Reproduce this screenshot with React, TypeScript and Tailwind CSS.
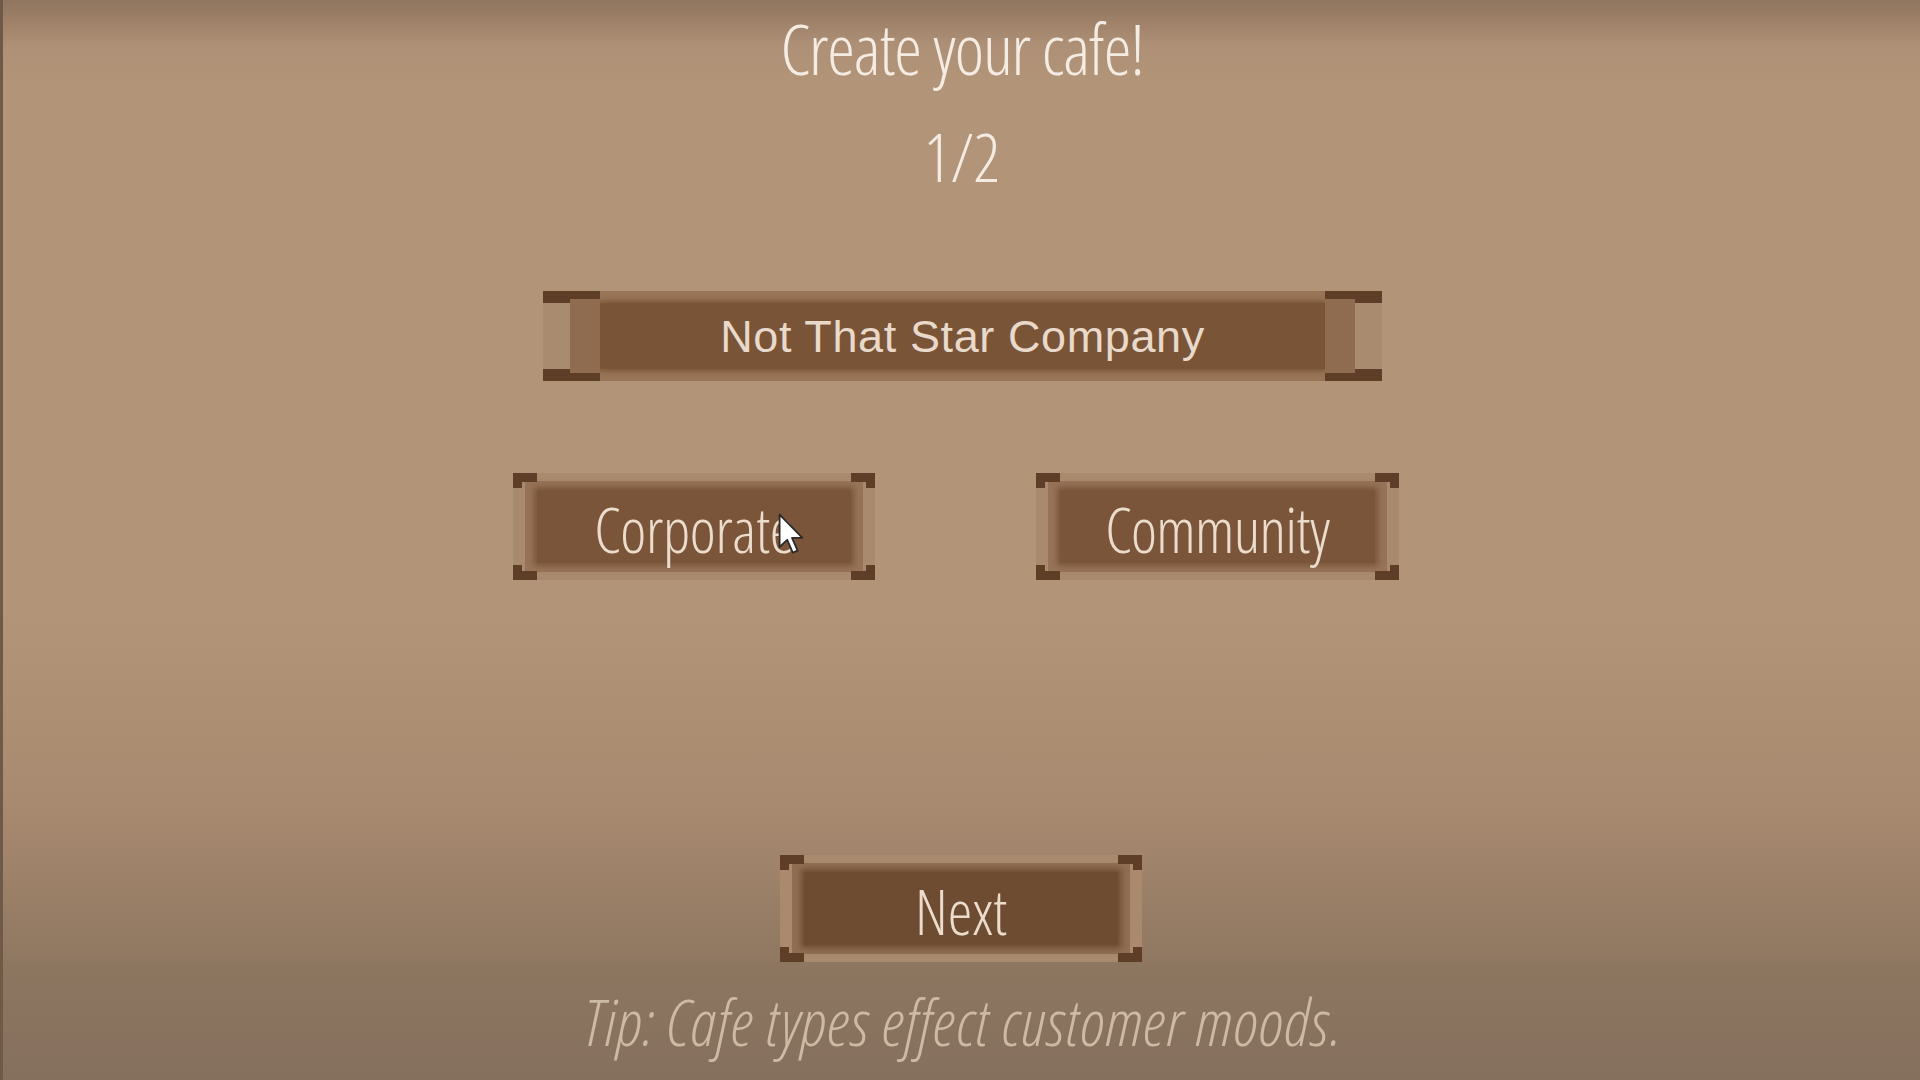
import React from "react";

const cond = "font-['Open_Sans',sans-serif] font-light [font-stretch:75%]";

function Corners({ color }: { color: string }) {
  return (
    <>
      <div className="absolute left-0 top-0 w-[24px] h-[15px]">
        <div className={`absolute left-0 top-0 w-[24px] h-[9px] ${color}`} />
        <div className={`absolute left-0 top-0 w-[9px] h-[15px] ${color}`} />
      </div>
      <div className="absolute right-0 top-0 w-[24px] h-[15px]">
        <div className={`absolute right-0 top-0 w-[24px] h-[9px] ${color}`} />
        <div className={`absolute right-0 top-0 w-[9px] h-[15px] ${color}`} />
      </div>
      <div className="absolute left-0 bottom-0 w-[24px] h-[15px]">
        <div className={`absolute left-0 bottom-0 w-[24px] h-[9px] ${color}`} />
        <div className={`absolute left-0 bottom-0 w-[9px] h-[15px] ${color}`} />
      </div>
      <div className="absolute right-0 bottom-0 w-[24px] h-[15px]">
        <div className={`absolute right-0 bottom-0 w-[24px] h-[9px] ${color}`} />
        <div className={`absolute right-0 bottom-0 w-[9px] h-[15px] ${color}`} />
      </div>
    </>
  );
}

function WoodButton({
  label,
  dark = false,
  className = "",
  textClass = "",
  children,
}: {
  label: string;
  dark?: boolean;
  className?: string;
  textClass?: string;
  children?: React.ReactNode;
}) {
  return (
    <div className={`relative w-[362px] h-[107px] bg-[#a98a6e] px-[12px] py-[8px] ${className}`}>
      <div className={`h-full w-full px-[12px] py-[9px] ${dark ? "bg-[#8f6e53]" : "bg-[#977459]"}`}>
        <div
          className={`h-full w-full flex items-center justify-center ${
            dark ? "bg-[#6e4c32] shadow-[0_0_6px_3px_#6e4c32]" : "bg-[#7a5539] shadow-[0_0_6px_3px_#7a5539]"
          }`}
        >
          <span className={`${cond} text-[62px] leading-none text-[#ecdccb] pt-[4px] ${textClass}`}>{label}</span>
        </div>
      </div>
      <Corners color="bg-[#5f3e28]" />
      {children}
    </div>
  );
}

function NameCap({ side }: { side: "left" | "right" }) {
  const left = side === "left";
  return (
    <div className={`relative w-[57px] h-full flex ${left ? "flex-row" : "flex-row-reverse"}`}>
      <div className="w-[27px] h-full bg-[#a98b6f]" />
      <div className="w-[30px] h-full bg-[#8f6c4f]" />
      <div className={`absolute top-0 ${left ? "left-0" : "right-0"} w-[57px] h-[8px] bg-[#5f3e28]`} />
      <div className={`absolute top-0 ${left ? "left-0" : "right-0"} w-[27px] h-[12px] bg-[#5f3e28]`} />
      <div className={`absolute bottom-0 ${left ? "left-0" : "right-0"} w-[57px] h-[8px] bg-[#5f3e28]`} />
      <div className={`absolute bottom-0 ${left ? "left-0" : "right-0"} w-[27px] h-[12px] bg-[#5f3e28]`} />
    </div>
  );
}

function Pointer() {
  return (
    <svg
      className="absolute left-[265px] top-[40px]"
      width="26"
      height="42"
      viewBox="0 0 13 21"
      fill="none"
    >
      <path
        d="M0.8 0.8 L0.8 17 L4.6 13.4 L7.4 19.8 L9.8 18.8 L7 12.4 L12.2 12.4 Z"
        fill="#ffffff"
        stroke="#2a2a2a"
        strokeWidth="0.9"
        strokeLinejoin="round"
      />
    </svg>
  );
}

export default function App() {
  return (
    <div className="w-[1920px] h-[1080px] overflow-hidden flex flex-col items-center shadow-[inset_3px_0_0_#6f5a48] bg-[linear-gradient(to_bottom,#8f7560_0px,#9c7f66_18px,#ad9076_45px,#b29478_80px,#b29478_620px,#a88a70_800px,#9a7f67_900px,#8d7660_970px,#85705e_1080px)]">
      <h1 className={`${cond} mt-[13px] h-[70px] text-[70px] leading-none tracking-[-1.2px] text-[#f4ece3] ml-[4px]`}>
        Create your cafe!
      </h1>
      <div className={`${cond} mt-[40px] h-[66px] text-[66px] leading-none text-[#f4ece3] ml-[4px]`}>1/2</div>

      <div className="mt-[102px] ml-[5px] w-[839px] h-[90px] flex">
        <NameCap side="left" />
        <div className="flex-1 h-full bg-[#987557] py-[12px]">
          <div className="h-full w-full bg-[#7a5437] shadow-[0_0_5px_2px_#7a5437] flex items-center justify-center">
            <span className="font-['Liberation_Sans',Arial,sans-serif] text-[45px] leading-none tracking-[0.6px] text-[#e8d9ca]">
              Not That Star Company
            </span>
          </div>
        </div>
        <NameCap side="right" />
      </div>

      <div className="mt-[92px] -ml-[8px] flex gap-[161px]">
        <WoodButton label="Corporate" textClass="tracking-[-0.3px]">
          <Pointer />
        </WoodButton>
        <WoodButton label="Community" className="w-[363px]" textClass="tracking-[-0.7px]" />
      </div>

      <WoodButton label="Next" dark className="mt-[275px] ml-[2px]" />

      <p className={`${cond} italic mt-[27px] text-[65px] leading-none tracking-[0.8px] text-[#cdbaa4] ml-[6px]`}>
        Tip: Cafe types effect customer moods.
      </p>
    </div>
  );
}
